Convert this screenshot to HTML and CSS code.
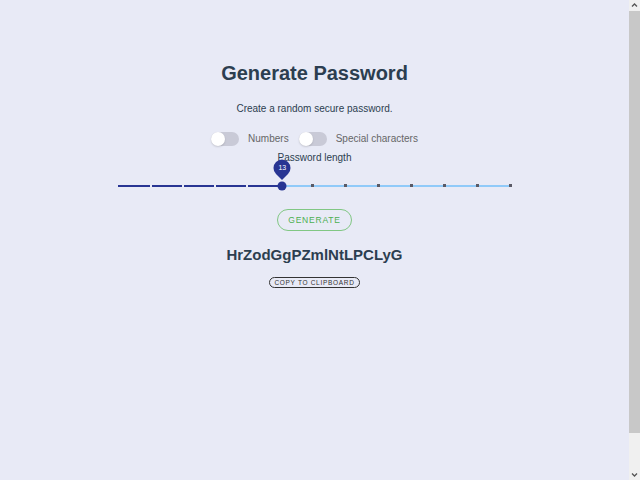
FILE: index.html
```html
<!DOCTYPE html>
<html lang="en">
<head>
    <meta charset="UTF-8">
    <meta name="viewport" content="width=device-width, initial-scale=1.0">
    <title>Generate Password</title>
    <link rel="stylesheet" href="styles.css">
</head>
<body>
    <div class="app">
        <h1>Generate Password</h1>
        <p class="subtitle">Create a random secure password.</p>

        <div class="options">
            <label class="switch">
                <span class="switch-track"><span class="switch-knob"></span></span>
                <span class="switch-label">Numbers</span>
            </label>
            <label class="switch">
                <span class="switch-track"><span class="switch-knob"></span></span>
                <span class="switch-label">Special characters</span>
            </label>
        </div>

        <div class="length-label">Password length</div>

        <div class="slider">
            <div class="slider-track">
                <div class="slider-fill" style="width: 41.667%"></div>
                <div class="slider-ticks">
                    <span class="tick is-hidden"></span>
                    <span class="tick is-filled"></span>
                    <span class="tick is-filled"></span>
                    <span class="tick is-filled"></span>
                    <span class="tick is-filled"></span>
                    <span class="tick is-hidden"></span>
                    <span class="tick"></span>
                    <span class="tick"></span>
                    <span class="tick"></span>
                    <span class="tick"></span>
                    <span class="tick"></span>
                    <span class="tick"></span>
                    <span class="tick"></span>
                </div>
                <div class="slider-thumb" style="left: 41.667%">
                    <div class="thumb-label"><span>13</span></div>
                </div>
            </div>
        </div>

        <button type="button" class="generate-btn">Generate</button>

        <div class="password">HrZodGgPZmlNtLPCLyG</div>

        <button type="button" class="copy-btn">Copy to clipboard</button>
    </div>

    <!-- page scrollbar -->
    <div class="scrollbar">
        <svg class="scroll-arrow" width="11" height="11" viewBox="0 0 11 11">
            <path d="M3 6.5 L5.5 4 L8 6.5" fill="none" stroke="#555" stroke-width="1.3"/>
        </svg>
        <div class="scroll-track"><div class="scroll-thumb"></div></div>
        <svg class="scroll-arrow" width="11" height="11" viewBox="0 0 11 11">
            <path d="M3 4.5 L5.5 7 L8 4.5" fill="none" stroke="#555" stroke-width="1.3"/>
        </svg>
    </div>
</body>
</html>
```

FILE: styles.css
```css
body {
    font-family: "Liberation Sans", Arial, sans-serif;
    background-color: #e8eaf6;
    color: #2c3e50;
    margin: 0;
    padding: 0 11px 0 0;
}

.app {
    padding-top: 60px;
    text-align: center;
}

h1 {
    font-size: 20px;
    line-height: 26px;
    margin: 0;
}

.subtitle {
    font-size: 10px;
    line-height: 14px;
    margin: 16px 0 0;
}

.options {
    display: flex;
    justify-content: center;
    gap: 10px;
    margin-top: 16px;
}

.switch {
    display: flex;
    align-items: center;
    gap: 9px;
}

.switch-track {
    width: 28px;
    height: 14px;
    border-radius: 7px;
    background-color: #c9cad7;
    display: flex;
    align-items: center;
}

.switch-knob {
    width: 14px;
    height: 14px;
    border-radius: 50%;
    background-color: #fff;
    box-shadow: 0 1px 2px rgba(0, 0, 0, 0.15);
}

.switch-label {
    font-size: 10px;
    line-height: 14px;
    color: #666;
}

.length-label {
    font-size: 10px;
    line-height: 12px;
    margin-top: 6px;
}

.slider {
    width: 394px;
    height: 20px;
    margin: 12px auto 0;
    display: flex;
    align-items: center;
}

.slider-track {
    position: relative;
    width: 100%;
    height: 2px;
    background-color: #90caf9;
}

.slider-fill {
    height: 2px;
    background-color: #283593;
}

.slider-ticks {
    position: absolute;
    left: -1px;
    right: -1px;
    top: -1px;
    height: 3px;
    display: flex;
    justify-content: space-between;
    align-items: center;
}

.tick {
    width: 3px;
    height: 3px;
    background-color: #5a5a66;
}

.tick.is-filled {
    width: 2px;
    height: 2px;
    background-color: #e8eaf6;
}

.tick.is-hidden {
    background-color: transparent;
}

.slider-thumb {
    position: absolute;
    top: 1px;
    width: 9px;
    height: 9px;
    border-radius: 50%;
    background-color: #283593;
    transform: translate(-50%, -50%);
}

.thumb-label {
    position: absolute;
    left: -4px;
    top: -22px;
    width: 17px;
    height: 17px;
    border-radius: 50% 50% 50% 0;
    background-color: #283593;
    transform: rotate(-45deg);
    display: flex;
    align-items: center;
    justify-content: center;
}

.thumb-label span {
    transform: rotate(45deg);
    color: #fff;
    font-size: 7px;
}

.generate-btn {
    display: block;
    margin: 13px auto 0;
    width: 75px;
    height: 22px;
    padding: 0;
    border: 1px solid #81c784;
    border-radius: 11px;
    background-color: transparent;
    color: #4caf50;
    font-family: inherit;
    font-size: 8.5px;
    letter-spacing: 0.8px;
    text-transform: uppercase;
}

.password {
    font-size: 15px;
    font-weight: bold;
    line-height: 18px;
    margin-top: 15px;
}

.copy-btn {
    display: block;
    margin: 13px auto 0;
    width: 91px;
    height: 11px;
    padding: 0;
    border: 1px solid #333;
    border-radius: 6px;
    background-color: transparent;
    color: #333;
    font-family: inherit;
    font-size: 6.5px;
    letter-spacing: 0.7px;
    line-height: 9px;
    text-transform: uppercase;
}

.scrollbar {
    position: fixed;
    top: 0;
    right: 0;
    width: 11px;
    height: 100%;
    background-color: #f0f0f0;
    display: flex;
    flex-direction: column;
}

.scroll-arrow {
    flex: none;
}

.scroll-track {
    flex: 1;
}

.scroll-thumb {
    height: 422px;
    background-color: #c8c8c8;
}
```
